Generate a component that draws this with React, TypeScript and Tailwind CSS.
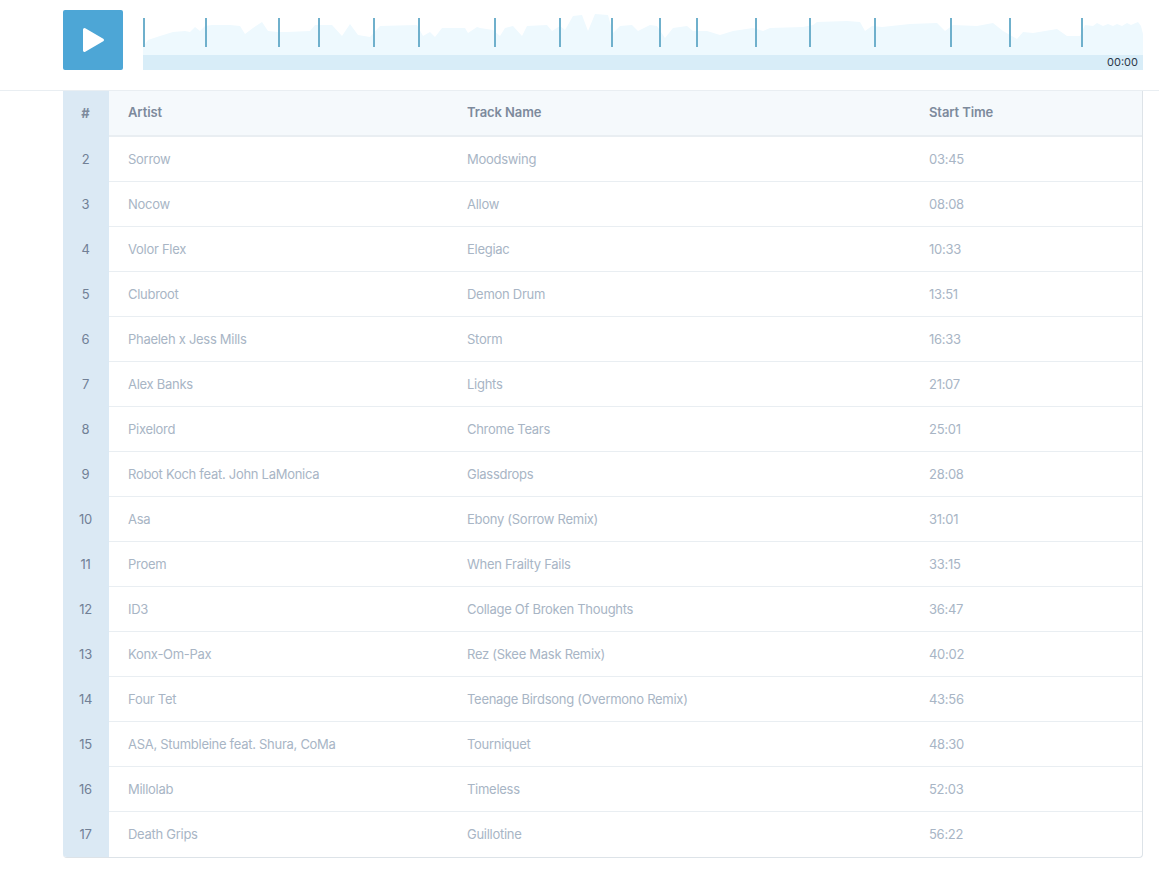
const tracks = [
  { num: 2, artist: "Sorrow", name: "Moodswing", start: "03:45" },
  { num: 3, artist: "Nocow", name: "Allow", start: "08:08" },
  { num: 4, artist: "Volor Flex", name: "Elegiac", start: "10:33" },
  { num: 5, artist: "Clubroot", name: "Demon Drum", start: "13:51" },
  { num: 6, artist: "Phaeleh x Jess Mills", name: "Storm", start: "16:33" },
  { num: 7, artist: "Alex Banks", name: "Lights", start: "21:07" },
  { num: 8, artist: "Pixelord", name: "Chrome Tears", start: "25:01" },
  { num: 9, artist: "Robot Koch feat. John LaMonica", name: "Glassdrops", start: "28:08" },
  { num: 10, artist: "Asa", name: "Ebony (Sorrow Remix)", start: "31:01" },
  { num: 11, artist: "Proem", name: "When Frailty Fails", start: "33:15" },
  { num: 12, artist: "ID3", name: "Collage Of Broken Thoughts", start: "36:47" },
  { num: 13, artist: "Konx-Om-Pax", name: "Rez (Skee Mask Remix)", start: "40:02" },
  { num: 14, artist: "Four Tet", name: "Teenage Birdsong (Overmono Remix)", start: "43:56" },
  { num: 15, artist: "ASA, Stumbleine feat. Shura, CoMa", name: "Tourniquet", start: "48:30" },
  { num: 16, artist: "Millolab", name: "Timeless", start: "52:03" },
  { num: 17, artist: "Death Grips", name: "Guillotine", start: "56:22" },
];

// page coordinates of the waveform's top edge, taken from the picture
const wavePoints = [
  [143, 47], [148, 40], [160, 36], [173, 32], [185, 31], [190, 32], [195, 27], [200, 31], [205, 26], [212, 25],
  [220, 25], [230, 25], [240, 26], [245, 34], [253, 28], [262, 22], [268, 31], [278, 32], [287, 32], [310, 31],
  [315, 25], [332, 25], [342, 36], [350, 24], [358, 35], [370, 37], [380, 26], [417, 25], [423, 36], [430, 32],
  [435, 37], [442, 28], [465, 28], [468, 33], [477, 27], [480, 28], [493, 30], [500, 36], [505, 28], [513, 26],
  [522, 36], [527, 26], [547, 25], [552, 31], [560, 26], [565, 30], [573, 16], [582, 15], [588, 31], [595, 14],
  [608, 15], [613, 33], [620, 26], [632, 25], [638, 31], [650, 25], [657, 26], [665, 38], [673, 28], [687, 26],
  [693, 31], [707, 31], [720, 35], [733, 31], [753, 28], [763, 31], [770, 28], [803, 27], [813, 25], [817, 22],
  [847, 21], [860, 22], [865, 31], [872, 26], [882, 27], [910, 24], [937, 23], [945, 31], [953, 25], [977, 26],
  [993, 23], [1003, 31], [1017, 39], [1023, 32], [1033, 33], [1057, 29], [1067, 36], [1080, 36], [1085, 25],
  [1093, 26], [1097, 23], [1103, 26], [1108, 24], [1113, 26], [1117, 24], [1122, 26], [1127, 23], [1131, 25],
  [1138, 22], [1141, 26], [1143, 34],
];

const cueMarks = [144, 206, 279, 319, 374, 419, 495, 560, 612, 660, 697, 756, 810, 875, 951, 1010, 1082];

const wavePath =
  "M0 45 " + wavePoints.map(([x, y]) => `L${x - 143} ${y - 10}`).join(" ") + " L1000 45 Z";

function App() {
  return (
    <div className="min-h-[871px] bg-white font-['Inter','Noto_Sans',sans-serif]">
      {/* player */}
      <div className="h-[91px] border-b border-[#e9eef2] pl-[63px] pr-4 pt-[10px] flex gap-5 items-start">
        <button className="w-[60px] h-[60px] bg-[#4da6d6] rounded-[2px] flex items-center justify-center shrink-0">
          <svg width="24" height="26" viewBox="0 0 24 26">
            <path d="M3.5 2.5 L21.5 13 L3.5 23.5 Z" fill="#fff" stroke="#fff" strokeWidth="3" strokeLinejoin="round" />
          </svg>
        </button>

        <div className="w-[1000px] flex flex-col">
          <svg width="1000" height="45" viewBox="0 0 1000 45" className="block">
            <path d={wavePath} fill="#eef9fe" />
            {cueMarks.map((x) => (
              <rect key={x} x={x - 144} y="8" width="2" height="29" fill="#6fb0cc" />
            ))}
          </svg>
          <div className="h-[15px] bg-[#d8edf8] flex items-center justify-end pr-[5px]">
            <span className="text-[11px] leading-none text-[#2d3748]">00:00</span>
          </div>
        </div>
      </div>

      {/* tracklist */}
      <div className="ml-[63px] w-[1080px] border-b border-r border-[#dde3e8] rounded-b-[4px] overflow-hidden">
        <div className="flex h-[46px]">
          <div className="w-[46px] bg-[#dbe9f4] flex items-center justify-center pr-[1px] text-[13px] font-bold text-[#7d8a9c]">#</div>
          <div className="flex-1 grid grid-cols-[339px_462px_1fr] items-center pl-[19px] bg-[#f5f9fc] border-b-2 border-[#e9eef2] text-[13px] font-semibold tracking-[-0.1px] text-[#7d8a9c]">
            <span>Artist</span>
            <span>Track Name</span>
            <span>Start Time</span>
          </div>
        </div>

        {tracks.map((t) => (
          <div key={t.num} className="group flex h-[45px]">
            <div className="w-[46px] bg-[#dbe9f4] flex items-center justify-center pr-[1px] text-[13px] tracking-[-0.24px] text-[#718096]">{t.num}</div>
            <div className="flex-1 grid grid-cols-[339px_462px_1fr] items-center pl-[19px] pt-[2px] group-last:pt-0 border-b border-[#e9eef2] group-last:border-b-0 text-[13px] tracking-[-0.28px] text-[#a8b5c5]">
              <span>{t.artist}</span>
              <span>{t.name}</span>
              <span>{t.start}</span>
            </div>
          </div>
        ))}
      </div>
    </div>
  );
}

export default App;
